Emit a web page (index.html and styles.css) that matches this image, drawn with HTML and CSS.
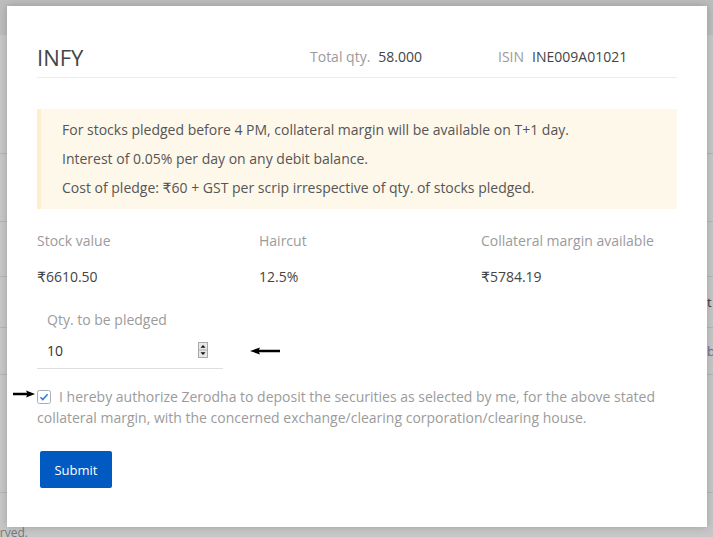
FILE: index.html
```html
<!DOCTYPE html>
<html lang="en">

<head>
    <meta charset="UTF-8">
    <meta name="viewport" content="width=device-width, initial-scale=1.0">
    <title>Pledge INFY</title>
    <link rel="stylesheet" href="styles.css">
</head>

<body>
    <!-- page behind the dialog -->
    <div class="page">
        <div class="page-top"></div>
        <div class="row h1"></div>
        <div class="row h2"></div>
        <div class="row h3"></div>
        <div class="row h4"><span class="cell">t</span></div>
        <div class="row h5"><span class="cell blue">b</span></div>
        <div class="row h6"></div>
        <footer><span>All rights reserved.</span></footer>
    </div>

    <div class="modal">
        <div class="modal-head">
            <h2>INFY</h2>
            <div class="meta"><span class="label">Total qty.</span><span class="val">58.000</span></div>
            <div class="meta"><span class="label">ISIN</span><span class="val">INE009A01021</span></div>
        </div>

        <div class="notice">
            <p>For stocks pledged before 4 PM, collateral margin will be available on T+1 day.</p>
            <p>Interest of 0.05% per day on any debit balance.</p>
            <p>Cost of pledge: ₹60 + GST per scrip irrespective of qty. of stocks pledged.</p>
        </div>

        <div class="stats">
            <div>
                <div class="label">Stock value</div>
                <div class="val">₹6610.50</div>
            </div>
            <div>
                <div class="label">Haircut</div>
                <div class="val">12.5%</div>
            </div>
            <div>
                <div class="label">Collateral margin available</div>
                <div class="val">₹5784.19</div>
            </div>
        </div>

        <div class="qty">
            <div class="field">
                <label for="qty">Qty. to be pledged</label>
                <div class="input">
                    <input id="qty" type="text" value="10">
                    <svg class="spin" width="10" height="16" viewBox="0 0 10 16">
                        <rect x="0.5" y="0.5" width="9" height="15" fill="#e8e8e8" stroke="#a9a9a9" />
                        <line x1="0.5" y1="8" x2="9.5" y2="8" stroke="#a9a9a9" />
                        <path d="M5 3 L7.5 5.8 H2.5 Z" fill="#111" />
                        <path d="M5 13 L7.5 10.2 H2.5 Z" fill="#111" />
                    </svg>
                </div>
            </div>
            <svg class="arrow" width="30" height="8" viewBox="0 0 30 8">
                <path d="M0 4 L10 0.5 L9 2.8 H30 V5.2 H9 L10 7.5 Z" fill="#000" />
            </svg>
        </div>

        <label class="consent">
            <svg class="pointer" width="22" height="8" viewBox="0 0 22 8">
                <path d="M22 4 L13 0.5 L14 2.8 H0 V5.2 H14 L13 7.5 Z" fill="#000" />
            </svg>
            <span class="check">
                <svg width="14" height="14" viewBox="0 0 14 14">
                    <rect x="0.5" y="0.5" width="13" height="13" rx="2" fill="#fff" stroke="#a4aebb" />
                    <path d="M3.5 7.2 L5.8 9.5 L10.6 4.3" fill="none" stroke="#2f7be0" stroke-width="1.6" />
                </svg>
            </span>I hereby authorize Zerodha to deposit the securities as selected by me, for the above stated collateral margin, with the concerned exchange/clearing corporation/clearing house.
        </label>

        <div class="actions">
            <button type="submit">Submit</button>
        </div>
    </div>
</body>

</html>
```

FILE: styles.css
```css
* {
    font-family: 'Open Sans', 'DejaVu Sans', sans-serif;
}

body {
    margin: 0;
    height: 537px;
    overflow: hidden;
    background: #c7c7c7;
}

/* page behind the overlay */
.page-top {
    height: 35px;
    background: #bdbdbd;
}

.row {
    display: flex;
    justify-content: flex-end;
    align-items: center;
    border-bottom: 1px solid #b5b5b5;
    font-size: 13px;
    color: #3b3b4a;

    &.h1 { height: 118px; }
    &.h2 { height: 67px; }
    &.h3 { height: 54px; }
    &.h4 { height: 50px; }
    &.h5 { height: 46px; }
    &.h6 { height: 117px; }

    .cell {
        width: 6px;
        overflow: hidden;
        white-space: nowrap;
    }

    .blue {
        color: #6a6f9a;
    }
}

footer {
    display: flex;
    justify-content: flex-end;
    width: 28px;
    padding-top: 31px;
    white-space: nowrap;
    font-size: 12px;
    line-height: 17px;
    color: #777;
}

/* dialog */
.modal {
    position: absolute;
    left: 7px;
    top: 6px;
    width: 700px;
    height: 521px;
    box-sizing: border-box;
    padding: 36px 30px;
    background: #fff;
    box-shadow: 0 0 8px rgba(0, 0, 0, 0.2);
}

.label {
    color: #9b9b9b;
}

.val {
    color: #444;
}

.modal-head {
    display: flex;
    align-items: center;
    padding-bottom: 5px;
    border-bottom: 1px solid #ececec;

    h2 {
        flex: 0 0 273px;
        margin: 0;
        font-size: 22px;
        font-weight: 400;
        line-height: 30px;
        color: #444;
    }

    .meta {
        display: flex;
        gap: 8px;
        flex: 0 0 188px;
        font-size: 14px;
        line-height: 20px;
    }

    .meta:last-child {
        flex: 1;
    }
}

.notice {
    margin-top: 31px;
    padding: 6px 20px 7px 21px;
    background: #fef8ea;
    border-left: 4px solid #fdefc9;

    p {
        margin: 0;
        font-size: 14px;
        line-height: 29px;
        color: #555;
    }
}

.stats {
    display: grid;
    grid-template-columns: 222px 222px 1fr;
    margin-top: 22px;
    font-size: 14px;
    line-height: 20px;

    .val {
        margin-top: 16px;
    }
}

.qty {
    display: flex;
    align-items: flex-end;
    margin-top: 23px;

    .arrow {
        margin: 0 0 14px 27px;
    }
}

.field {
    width: 186px;

    label {
        display: block;
        padding-left: 10px;
        font-size: 14px;
        line-height: 20px;
        color: #9b9b9b;
    }

    .input {
        display: flex;
        align-items: center;
        height: 37px;
        box-sizing: border-box;
        margin-top: 2px;
        padding: 0 15px 0 10px;
        border-bottom: 1px solid #dedede;
    }

    input {
        width: 100px;
        padding: 0;
        border: 0;
        outline: none;
        background: transparent;
        font-size: 14px;
        color: #333;
    }

    .spin {
        margin-left: auto;
    }
}

.consent {
    position: relative;
    display: block;
    margin-top: 17px;
    font-size: 14px;
    line-height: 21px;
    color: #9b9b9b;

    .pointer {
        position: absolute;
        left: -24px;
        top: 4px;
    }

    .check {
        display: inline-block;
        width: 14px;
        height: 14px;
        margin-right: 8px;
        vertical-align: -2px;

        svg {
            display: block;
        }
    }
}

.actions {
    margin-top: 23px;

    button {
        width: 72px;
        height: 37px;
        margin-left: 3px;
        border: 0;
        border-radius: 2px;
        background: #005ac2;
        color: #fff;
        font-size: 13px;
        cursor: pointer;
    }
}
```
